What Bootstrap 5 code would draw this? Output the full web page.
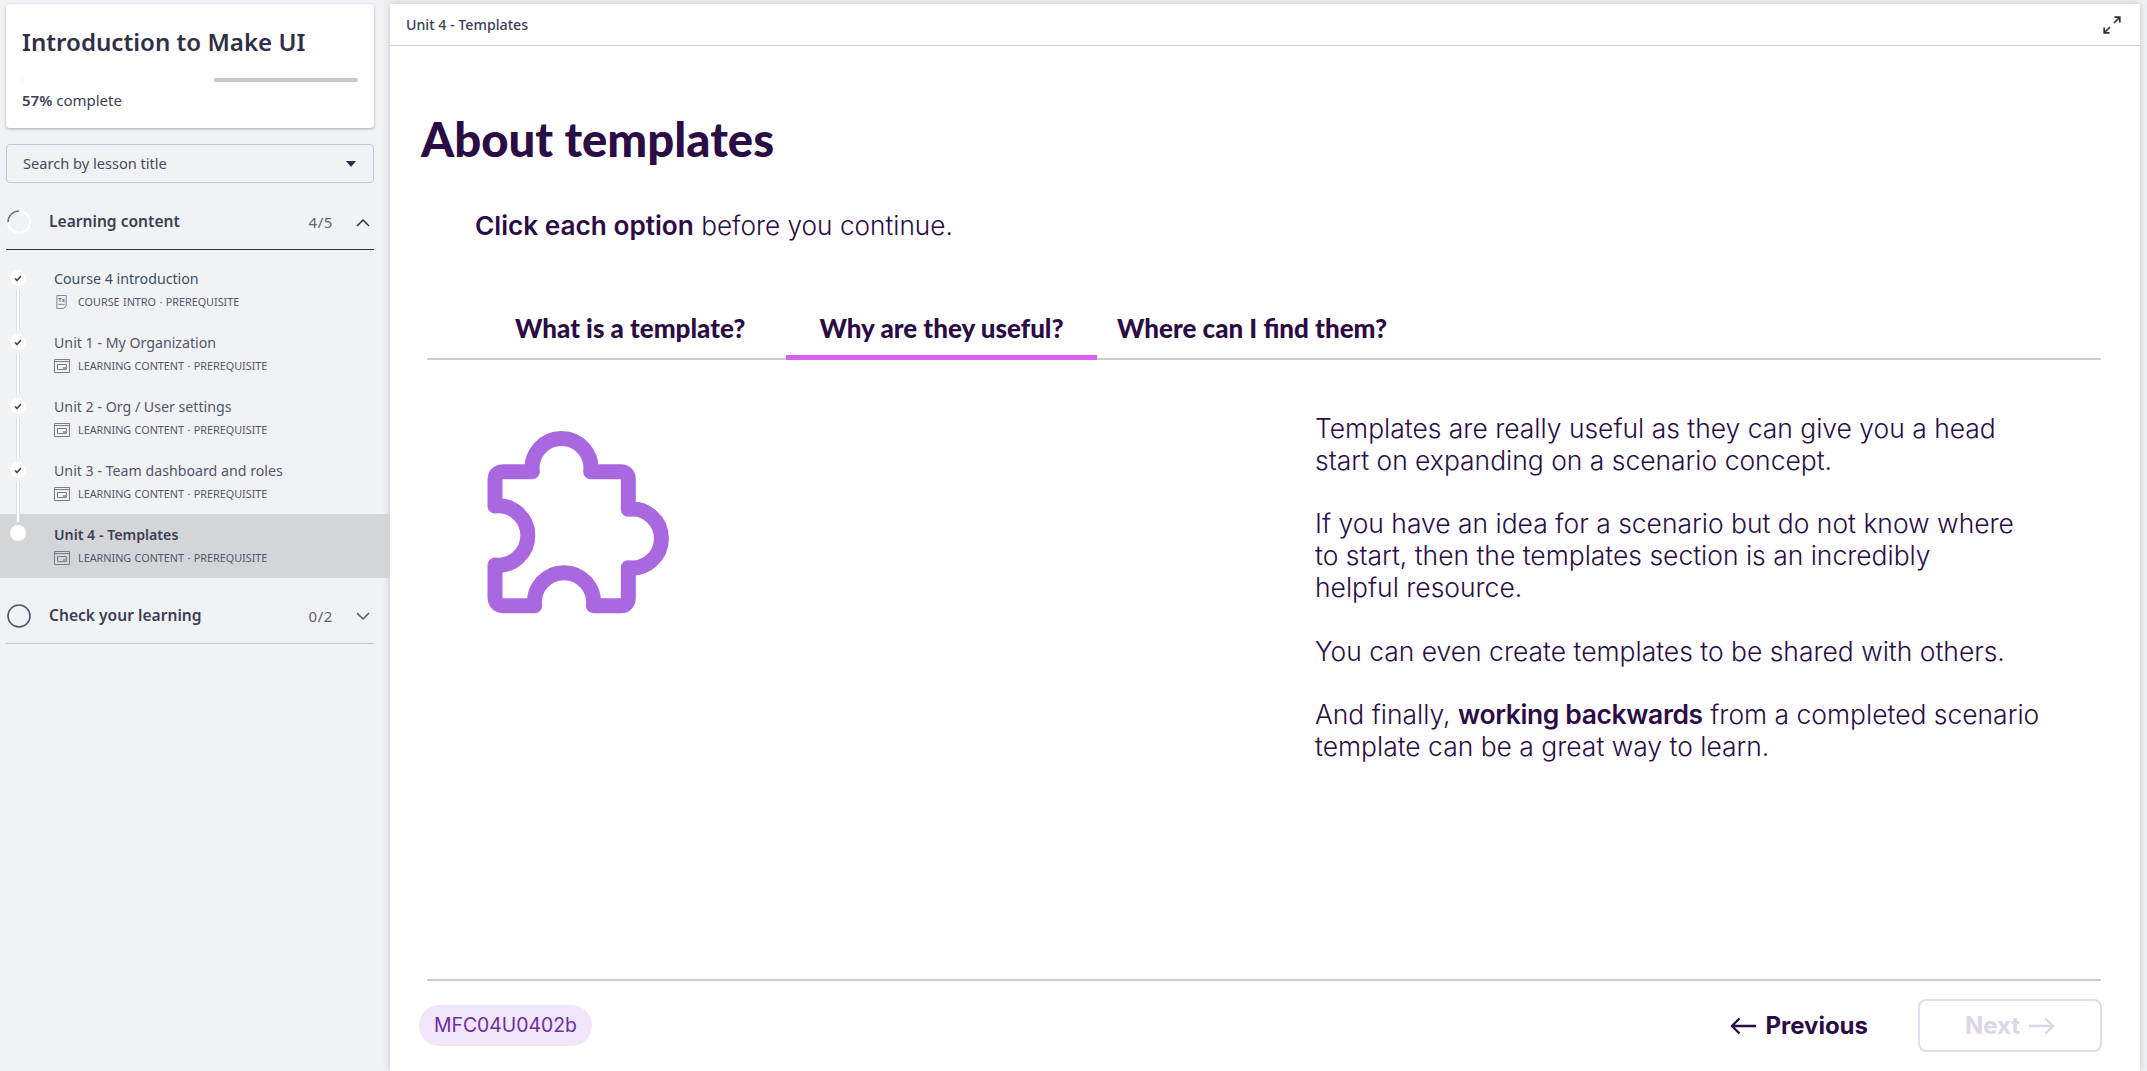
<!DOCTYPE html>
<html lang="en">
<head>
<meta charset="utf-8">
<title>About templates</title>
<link href="https://cdn.jsdelivr.net/npm/bootstrap@5.3.0/dist/css/bootstrap.min.css" rel="stylesheet">
<style>
html,body{height:100%;}
body{background:#f1f2f5;font-family:"Noto Sans",sans-serif;color:#2d2f45;overflow:hidden;}
.shell{height:1071px;width:2147px;}
.side{width:390px;flex:none;}
.side-wrap{padding:4px 16px 0 6px;}
.sum-card{height:124px;padding:21px 16px 0;border:0;border-radius:4px;box-shadow:0 1px 3px rgba(0,0,0,.3);}
.sum-title{font-size:24.1px;font-weight:600;line-height:34px;margin:0;color:#2f3047;}
.sum-bar{height:4px;margin-top:19px;background:#c5c8d3;border-radius:2px;}
.sum-bar .progress-bar{background:#fff;}
.sum-pct{font-size:15px;line-height:20px;margin-top:8px;color:#3f4155;}
.sum-pct b{font-weight:600;}
.lesson-search{height:39px;margin-top:16px;border:1px solid #c4c6d2;border-radius:4px;padding:0 16px;font-size:14.6px;color:#484a5e;}
.caret-down{width:0;height:0;border-left:5px solid transparent;border-right:5px solid transparent;border-top:6px solid #2d2f45;margin-right:1px;}
.sec-head{height:55px;margin-top:12px;border-bottom:1px solid #2d2f45;}
.sec-head.closed{height:55px;margin-top:11px;border-bottom-color:#c4c6d2;}
.sec-ring{width:24px;height:24px;margin-left:1px;}
.sec-name{font-size:15.6px;font-weight:600;margin-left:18px;color:#3c3e52;}
.sec-count{font-size:15px;color:#62647a;margin-right:23px;letter-spacing:.6px;}
.lesson-list{padding-top:8px;}
.lesson{height:64px;padding-left:10px;position:relative;}
.lesson.now{background:#d4d5d9;}
.mark-col{width:16px;flex:none;padding-top:12px;}
.now .mark-col{padding-top:11px;}
.mark{width:16px;height:16px;background:#fff;border-radius:50%;flex:none;}
.mark-line{width:4px;height:40px;flex:none;margin-top:4px;background:#fff;border-left:1px solid #dcdde3;border-right:1px solid #dcdde3;position:relative;z-index:1;}
.lesson-body{margin-left:28px;padding-top:11px;}
.lesson-name{font-size:14.2px;line-height:20px;color:#53556a;}
.lesson:first-child .lesson-name{color:#3f4d62;}
.now .lesson-name{font-weight:600;color:#3c3e52;}
.lesson-meta{font-size:10.8px;line-height:14px;margin-top:6px;color:#53556a;word-spacing:.6px;}
.lesson-meta svg{width:16px;height:14px;flex:none;margin-right:8px;}
.main-pane{width:1750px;flex:none;margin-top:4px;background:#fff;box-shadow:0 0 8px rgba(0,0,0,.18);height:1067px;}
.top-strip{height:42px;border-bottom:1px solid #cfd0da;padding:0 19px 0 16px;font-size:14.2px;font-weight:500;color:#3c3e52;}
.pane-body{padding:0 39px 0 37px;flex:1;color:#2b0c45;font-family:Inter,sans-serif;min-height:0;}
.page-h{font-family:Lato,sans-serif;font-weight:900;font-size:47.3px;line-height:60px;margin:63px 0 0 -6px;color:#2b0c45;}
.lead-line{font-size:26.2px;font-weight:300;line-height:34px;margin:40px 0 0 48px;}
.lead-line b{font-weight:600;}
.tab-row{margin-top:66px;border-bottom:2px solid #d0cdd0;height:51px;padding-left:88px;flex-wrap:nowrap;flex:none;}
.tab-row .nav-link{font-family:Lato,sans-serif;font-weight:900;font-size:26px;color:#2b0c45;padding:0;height:51px;line-height:38px;border-bottom:5px solid transparent;margin-bottom:-2px;border-radius:0;}
.tab-row .nav-link.active{border-bottom-color:#d95ff5;}
.t1{width:271px;}.t2{width:311px;text-align:center;}.t3{margin-left:20px;white-space:nowrap;}
.panel-grid{flex:1;min-height:0;}
.puzzle{width:260px;height:240px;margin:40px 0 0 12px;flex:none;}
.copy{width:730px;margin:53px 56px 0 auto;font-size:26.45px;font-weight:300;line-height:31.8px;}
.copy p{margin:0 0 31.8px;}
.copy b{font-weight:600;letter-spacing:-.35px;}
.foot-zone{height:92px;border-top:2px solid #d0cdd0;flex:none;position:relative;}
.code-pill{margin:24px 0 0 -8px;height:41px;width:173px;border-radius:21px;background:#f1e5fa;color:#6c2ea0;font-size:19.4px;font-weight:400;}
.btn-prev,.btn-next{font-family:Inter,sans-serif;font-weight:700;font-size:24px;height:53px;}
.btn-prev{color:#2b0c45;border:0;margin-right:50px;padding:0;margin-top:18px;}
.btn-next{color:#ddd5e8;border:2px solid #e2dcec;border-radius:8px;width:184px;margin-top:18px;margin-right:-1px;background:#fff;}
.btn-next:disabled{color:#ddd5e8;border-color:#e2dcec;opacity:1;}
.arrow{width:27px;height:18px;}
</style>
</head>
<body>
<div class="shell d-flex">
  <aside class="side">
    <div class="side-wrap">
      <div class="card sum-card">
        <h1 class="sum-title">Introduction to Make UI</h1>
        <div class="progress sum-bar"><div class="progress-bar" style="width:57%"></div></div>
        <div class="sum-pct"><b>57%</b> complete</div>
      </div>
      <div class="lesson-search d-flex align-items-center justify-content-between">Search by lesson title<span class="caret-down"></span></div>
      <div class="sec-head d-flex align-items-center">
        <svg class="sec-ring" viewBox="0 0 24 24"><circle cx="12" cy="12" r="11" fill="none" stroke="#fff" stroke-width="2"/><path d="M1 12A11 11 0 0 1 12 1" fill="none" stroke="#6f7182" stroke-width="1.6"/></svg>
        <span class="sec-name">Learning content</span>
        <span class="sec-count ms-auto">4/5</span>
        <svg width="14" height="9" viewBox="0 0 14 9" class="me-1"><path d="M1 8l6-6 6 6" fill="none" stroke="#2d2f45" stroke-width="1.5"/></svg>
      </div>
    </div>
    <div class="lesson-list">
      <div class="lesson d-flex">
        <div class="mark-col d-flex flex-column align-items-center"><div class="mark d-flex align-items-center justify-content-center"><svg width="8" height="7" viewBox="0 0 8 7"><path d="M1 3.5l2 2 4-4.500" fill="none" stroke="#2d2f45" stroke-width="1.300"/></svg></div><div class="mark-line"></div></div>
        <div class="lesson-body"><div class="lesson-name">Course 4 introduction</div>
          <div class="lesson-meta d-flex align-items-center"><svg viewBox="0 0 16 15"><path d="M2.500 .5h10v11l-3 3h-7z" fill="none" stroke="#7a7c8e"/><text x="4" y="7" font-size="6" font-weight="700" fill="#5c5e72" font-family="Liberation Sans">Tx</text><path d="M4 10h7" stroke="#7a7c8e"/></svg><span>COURSE INTRO · PREREQUISITE</span></div></div>
      </div>
      <div class="lesson d-flex">
        <div class="mark-col d-flex flex-column align-items-center"><div class="mark d-flex align-items-center justify-content-center"><svg width="8" height="7" viewBox="0 0 8 7"><path d="M1 3.5l2 2 4-4.500" fill="none" stroke="#2d2f45" stroke-width="1.300"/></svg></div><div class="mark-line"></div></div>
        <div class="lesson-body"><div class="lesson-name">Unit 1 - My Organization</div>
          <div class="lesson-meta d-flex align-items-center"><svg viewBox="0 0 16 14"><path d="M.5 .5h15v13H.5zM.5 2.500h15" fill="none" stroke="#7a7c8e"/><path d="M3.500 5.500h9v5h-9z" fill="none" stroke="#7a7c8e"/><path d="M9 8h3.500v2.500H9z" fill="#9a9cab"/></svg><span>LEARNING CONTENT · PREREQUISITE</span></div></div>
      </div>
      <div class="lesson d-flex">
        <div class="mark-col d-flex flex-column align-items-center"><div class="mark d-flex align-items-center justify-content-center"><svg width="8" height="7" viewBox="0 0 8 7"><path d="M1 3.5l2 2 4-4.500" fill="none" stroke="#2d2f45" stroke-width="1.300"/></svg></div><div class="mark-line"></div></div>
        <div class="lesson-body"><div class="lesson-name">Unit 2 - Org / User settings</div>
          <div class="lesson-meta d-flex align-items-center"><svg viewBox="0 0 16 14"><path d="M.5 .5h15v13H.5zM.5 2.500h15" fill="none" stroke="#7a7c8e"/><path d="M3.500 5.500h9v5h-9z" fill="none" stroke="#7a7c8e"/><path d="M9 8h3.500v2.500H9z" fill="#9a9cab"/></svg><span>LEARNING CONTENT · PREREQUISITE</span></div></div>
      </div>
      <div class="lesson d-flex">
        <div class="mark-col d-flex flex-column align-items-center"><div class="mark d-flex align-items-center justify-content-center"><svg width="8" height="7" viewBox="0 0 8 7"><path d="M1 3.5l2 2 4-4.500" fill="none" stroke="#2d2f45" stroke-width="1.300"/></svg></div><div class="mark-line"></div></div>
        <div class="lesson-body"><div class="lesson-name">Unit 3 - Team dashboard and roles</div>
          <div class="lesson-meta d-flex align-items-center"><svg viewBox="0 0 16 14"><path d="M.5 .5h15v13H.5zM.5 2.500h15" fill="none" stroke="#7a7c8e"/><path d="M3.500 5.500h9v5h-9z" fill="none" stroke="#7a7c8e"/><path d="M9 8h3.500v2.500H9z" fill="#9a9cab"/></svg><span>LEARNING CONTENT · PREREQUISITE</span></div></div>
      </div>
      <div class="lesson now d-flex">
        <div class="mark-col d-flex flex-column align-items-center"><div class="mark"></div></div>
        <div class="lesson-body"><div class="lesson-name">Unit 4 - Templates</div>
          <div class="lesson-meta d-flex align-items-center"><svg viewBox="0 0 16 14"><path d="M.5 .5h15v13H.5zM.5 2.500h15" fill="none" stroke="#7a7c8e"/><path d="M3.500 5.500h9v5h-9z" fill="none" stroke="#7a7c8e"/><path d="M9 8h3.500v2.500H9z" fill="#9a9cab"/></svg><span>LEARNING CONTENT · PREREQUISITE</span></div></div>
      </div>
    </div>
    <div class="side-wrap pt-0">
      <div class="sec-head closed d-flex align-items-center">
        <svg class="sec-ring" viewBox="0 0 24 24"><circle cx="12" cy="12" r="11" fill="none" stroke="#53556a" stroke-width="1.6"/></svg>
        <span class="sec-name">Check your learning</span>
        <span class="sec-count ms-auto">0/2</span>
        <svg width="14" height="9" viewBox="0 0 14 9" class="me-1"><path d="M1 1l6 6 6-6" fill="none" stroke="#53556a" stroke-width="1.5"/></svg>
      </div>
    </div>
  </aside>
  <main class="main-pane d-flex flex-column">
    <div class="top-strip d-flex align-items-center justify-content-between">
      <span>Unit 4 - Templates</span>
      <svg width="18" height="18" viewBox="0 0 18 18"><path d="M1.500 16.500L7 11M11 7l5.500-5.500" stroke="#2d2f45" stroke-width="1.700" fill="none"/><path d="M11.500 1.200h5.300v5.300M6.500 16.800H1.200v-5.300" stroke="#2d2f45" stroke-width="1.700" fill="none"/></svg>
    </div>
    <div class="pane-body d-flex flex-column">
      <h2 class="page-h">About templates</h2>
      <p class="lead-line"><b>Click each option</b> before you continue.</p>
      <ul class="nav tab-row">
        <li class="nav-item t1"><a class="nav-link" href="#">What is a template?</a></li>
        <li class="nav-item t2"><a class="nav-link active" href="#">Why are they useful?</a></li>
        <li class="nav-item t3"><a class="nav-link" href="#">Where can I find them?</a></li>
      </ul>
      <div class="panel-grid d-flex">
        <svg class="puzzle" viewBox="0 0 780 720"><path d="M280 215H195Q168 215 168 240V318A89 89 0 1 1 168 495V590Q168 617 195 617H287A88.600 88.600 0 1 1 463 617H545Q568 617 568 592V503A88.200 88.200 0 1 0 568 328V240Q568 215 545 215H455A88.200 88.200 0 1 0 280 215Z" fill="none" stroke="#a968e0" stroke-width="45" stroke-linejoin="round"/></svg>
        <div class="copy">
          <p>Templates are really useful as they can give you a head start on expanding on a scenario concept.</p>
          <p>If you have an idea for a scenario but do not know where<br>to start, then the templates section is an incredibly<br>helpful resource.</p>
          <p>You can even create templates to be shared with others.</p>
          <p>And finally, <b>working backwards</b> from a completed scenario template can be a great way to learn.</p>
        </div>
      </div>
      <div class="foot-zone d-flex align-items-start">
        <span class="code-pill d-flex align-items-center justify-content-center">MFC04U0402b</span>
        <button type="button" class="btn btn-prev ms-auto d-flex align-items-center gap-2"><svg class="arrow" viewBox="0 0 27 18"><path d="M26 9H2M9.500 1.500L2 9l7.500 7.500" fill="none" stroke="#2b0c45" stroke-width="2.400"/></svg>Previous</button>
        <button type="button" class="btn btn-next d-flex align-items-center justify-content-center gap-2" disabled>Next<svg class="arrow" viewBox="0 0 27 18"><path d="M1 9h24M17.500 1.500L25 9l-7.500 7.500" fill="none" stroke="#ddd5e8" stroke-width="2.400"/></svg></button>
      </div>
    </div>
  </main>
</div>
<script src="https://cdn.jsdelivr.net/npm/bootstrap@5.3.0/dist/js/bootstrap.bundle.min.js"></script>
</body>
</html>
